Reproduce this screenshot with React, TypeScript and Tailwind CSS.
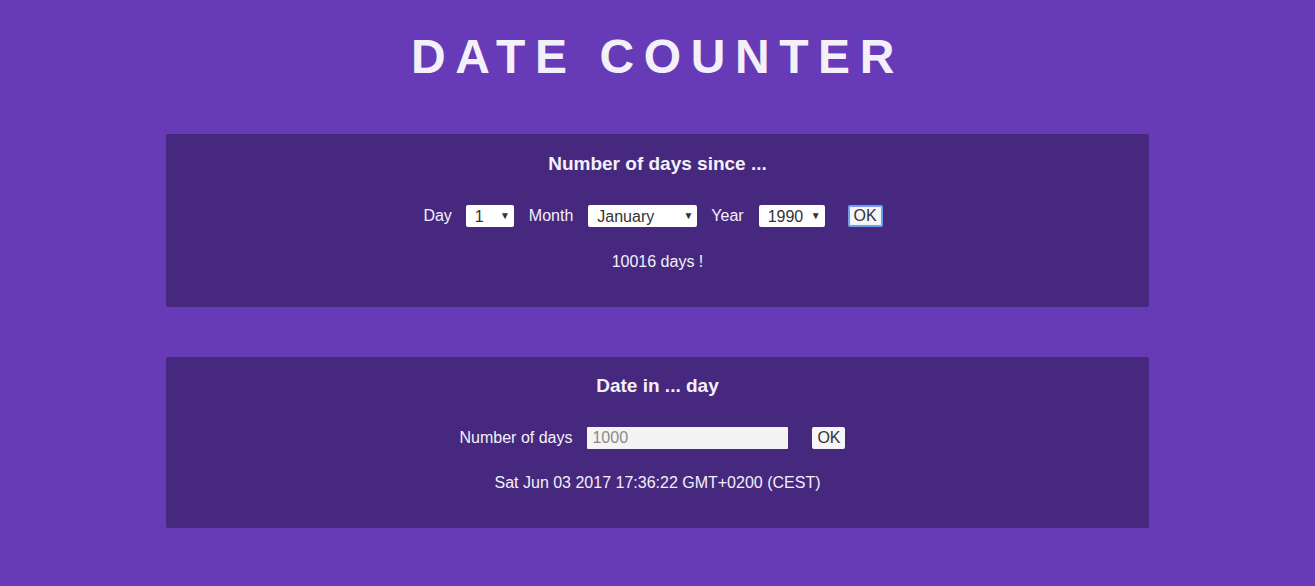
import { useState } from "react";

const months = ["January", "February", "March", "April", "May", "June", "July", "August", "September", "October", "November", "December"];

function Select({ value, options, className }: { value: string; options: string[]; className: string }) {
    return (
        <div className={`relative h-[22px] bg-white rounded-[2px] ${className}`}>
            <select
                defaultValue={value}
                className="appearance-none w-full h-full bg-transparent pl-[9px] pr-5 text-[16px] leading-[22px] text-[#333] outline-none"
            >
                {options.map((o) => (
                    <option key={o}>{o}</option>
                ))}
            </select>
            <span className="pointer-events-none absolute right-[4px] top-0 text-[10px] leading-[22px] text-[#333]">▼</span>
        </div>
    );
}

export default function App() {
    const [days] = useState(10016);
    const dayOpts = Array.from({ length: 31 }, (_, i) => String(i + 1));
    const yearOpts = Array.from({ length: 60 }, (_, i) => String(1960 + i));

    return (
        <div className="min-h-[586px] bg-[#673ab7] text-[#f4f0fa] pt-[33px] pb-[58px]" style={{ fontFamily: '"Liberation Sans", Arial, sans-serif' }}>
            <h1 className="text-center text-[48px] leading-[48px] font-bold tracking-[0.2em]">DATE COUNTER</h1>

            <div className="w-[983px] mx-auto mt-[53px] bg-[#46297f] rounded-[2px] pt-[19px] pb-[36px]">
                <h2 className="text-center text-[19px] leading-[22px] font-bold">Number of days since ...</h2>
                <div className="flex items-center justify-center mt-[30px] h-[22px] text-[16px] pr-[9px]">
                    <span>Day</span>
                    <Select value="1" options={dayOpts} className="w-[48px] ml-[14px]" />
                    <span className="ml-[15px]">Month</span>
                    <Select value="January" options={months} className="w-[109px] ml-[15px]" />
                    <span className="ml-[14px]">Year</span>
                    <Select value="1990" options={yearOpts} className="w-[66px] ml-[15px]" />
                    <button className="ml-[23px] h-[22px] w-[35px] bg-[#f6f6f8] text-[#333] text-[16px] leading-[18px] border-2 border-[#6f9ef0] rounded-[2px]">OK</button>
                </div>
                <p className="text-center mt-[26px] text-[16px] leading-[18px]">{days} days !</p>
            </div>

            <div className="w-[983px] mx-auto mt-[50px] bg-[#46297f] rounded-[2px] pt-[18px] pb-[36px]">
                <h2 className="text-center text-[19px] leading-[22px] font-bold">Date in ... day</h2>
                <div className="flex items-center justify-center mt-[30px] h-[22px] text-[16px] pr-[10px]">
                    <span>Number of days</span>
                    <input
                        placeholder="1000"
                        className="ml-[15px] w-[201px] h-[22px] bg-[#f4f4f4] px-[5px] text-[16px] text-[#333] placeholder:text-[#8a8a8a] outline-none rounded-[1px]"
                    />
                    <button className="ml-[24px] h-[22px] w-[33px] bg-[#f6f6f8] text-[#333] text-[16px] leading-[18px] rounded-[2px]">OK</button>
                </div>
                <p className="text-center mt-[25px] text-[16px] leading-[18px]">Sat Jun 03 2017 17:36:22 GMT+0200 (CEST)</p>
            </div>
        </div>
    );
}
